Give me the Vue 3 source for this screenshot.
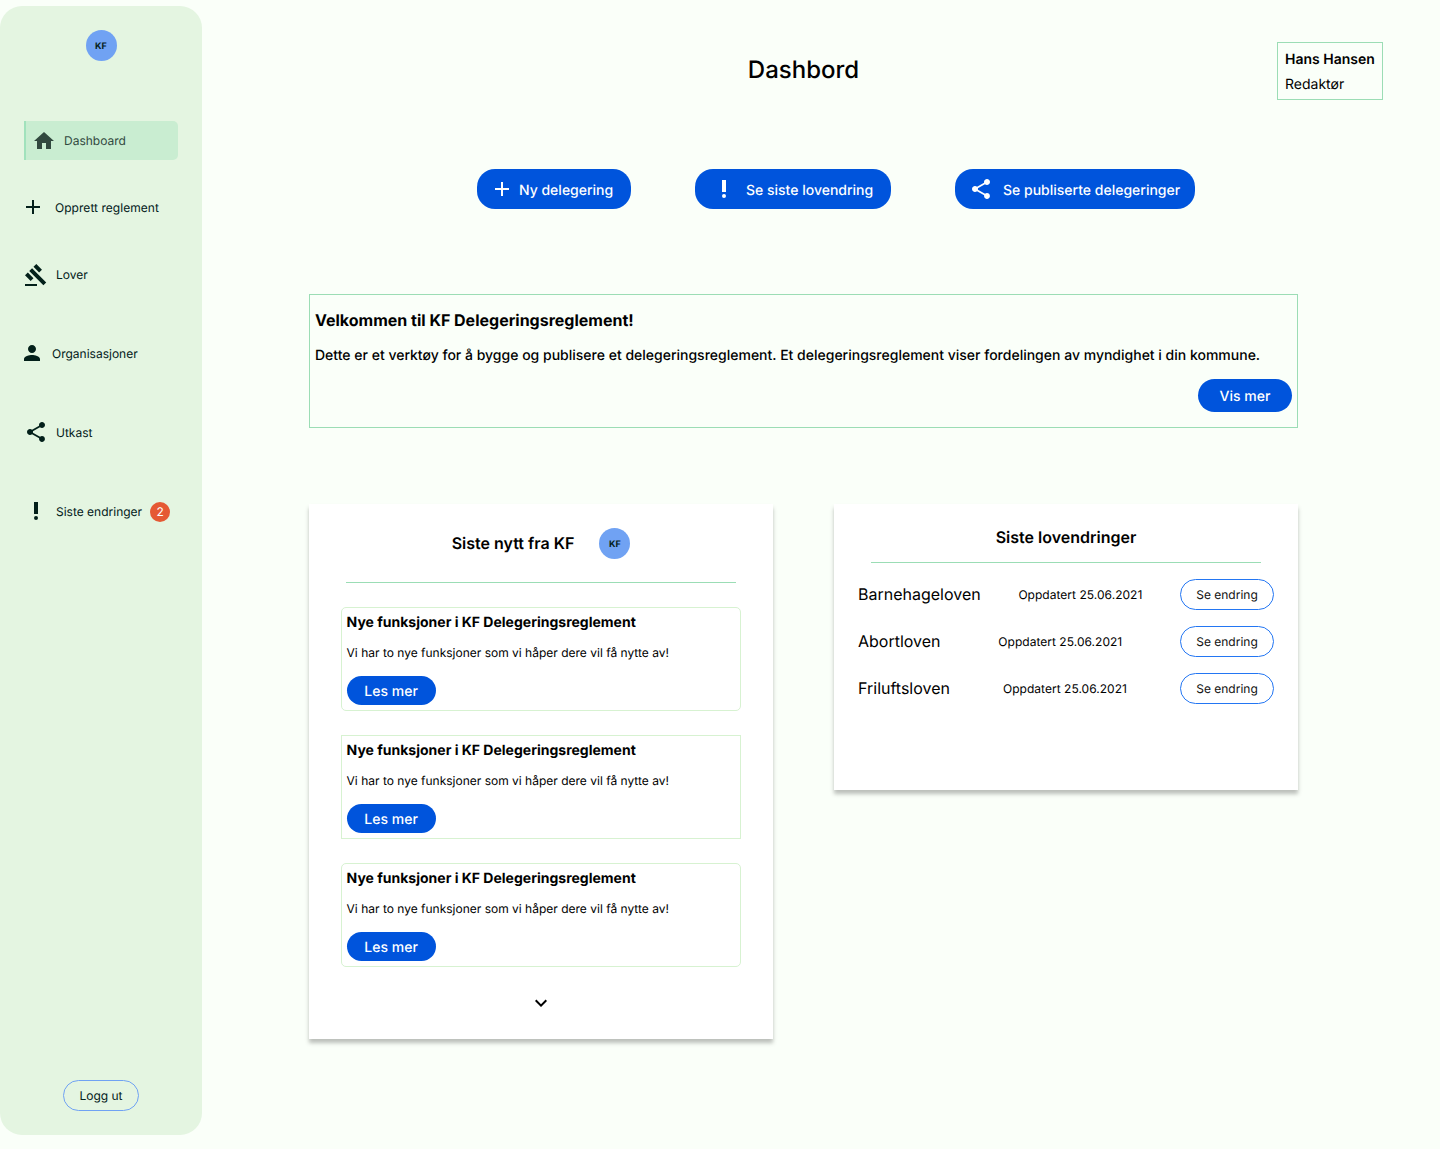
<script setup>
const icons = {
  home: 'M10 20v-6h4v6h5v-8h3L12 3 2 12h3v8z',
  add: 'M19 13h-6v6h-2v-6H5v-2h6V5h2v6h6v2z',
  gavel: 'M1 21h12v2H1zM5.245 8.07l2.83-2.827 14.14 14.142-2.828 2.828zM12.317 1l5.657 5.656-2.83 2.83-5.654-5.66zM3.825 9.485l5.657 5.657-2.828 2.828-5.657-5.657z',
  person: 'M12 12c2.21 0 4-1.79 4-4s-1.79-4-4-4-4 1.79-4 4 1.79 4 4 4zm0 2c-2.67 0-8 1.34-8 4v2h16v-2c0-2.66-5.33-4-8-4z',
  share: 'M18 16.08c-.76 0-1.44.3-1.96.77L8.91 12.7c.05-.23.09-.46.09-.7s-.04-.47-.09-.7l7.05-4.11c.54.5 1.25.81 2.04.81 1.66 0 3-1.34 3-3s-1.34-3-3-3-3 1.34-3 3c0 .24.04.47.09.7L8.04 9.81C7.5 9.31 6.79 9 6 9c-1.66 0-3 1.34-3 3s1.34 3 3 3c.79 0 1.5-.31 2.04-.81l7.12 4.16c-.05.21-.08.43-.08.65 0 1.61 1.31 2.92 2.92 2.92s2.92-1.31 2.92-2.92-1.31-2.92-2.92-2.92z',
  alert: 'M10 3h4v12h-4zM12 17a2 2 0 1 0 0 4 2 2 0 0 0 0-4z',
  more: 'M16.59 8.59L12 13.17 7.41 8.59 6 10l6 6 6-6z',
}
const nav = [
  { name: 'dashboard', icon: 'home', label: 'Dashboard' },
  { name: 'create', icon: 'add', label: 'Opprett reglement' },
  { name: 'laws', icon: 'gavel', label: 'Lover' },
  { name: 'orgs', icon: 'person', label: 'Organisasjoner' },
  { name: 'drafts', icon: 'share', label: 'Utkast' },
  { name: 'changes', icon: 'alert', label: 'Siste endringer', badge: 2 },
]
const actions = [
  { name: 'new', icon: 'add', label: 'Ny delegering' },
  { name: 'recent', icon: 'alert', label: 'Se siste lovendring' },
  { name: 'published', icon: 'share', label: 'Se publiserte delegeringer' },
]
const news = [1, 2, 3]
const laws = ['Barnehageloven', 'Abortloven', 'Friluftsloven']
</script>

<template>
  <div class="page">
    <aside class="sidebar">
      <div class="logo">KF</div>
      <nav class="nav">
        <a v-for="n in nav" :key="n.name" class="nav-item" :class="n.name">
          <svg class="icon" viewBox="0 0 24 24"><path :d="icons[n.icon]" /></svg>
          <span>{{ n.label }}</span>
          <span v-if="n.badge" class="badge">{{ n.badge }}</span>
        </a>
      </nav>
      <button class="outline logout">Logg ut</button>
    </aside>

    <main class="main">
      <header class="header">
        <h1>Dashbord</h1>
        <div class="user">
          <strong>Hans Hansen</strong>
          <span>Redaktør</span>
        </div>
      </header>

      <div class="actions">
        <button v-for="a in actions" :key="a.name" class="primary action" :class="a.name">
          <svg class="icon" viewBox="0 0 24 24"><path :d="icons[a.icon]" /></svg>
          <span>{{ a.label }}</span>
        </button>
      </div>

      <section class="welcome">
        <h2>Velkommen til KF Delegeringsreglement!</h2>
        <p>Dette er et verktøy for å bygge og publisere et delegeringsreglement. Et delegeringsreglement viser fordelingen av myndighet i din kommune.</p>
        <button class="primary show">Vis mer</button>
      </section>

      <div class="cards">
        <section class="card news">
          <div class="card-head">
            <h3>Siste nytt fra KF</h3>
            <div class="logo">KF</div>
          </div>
          <div class="rule"></div>
          <article v-for="i in news" :key="i" class="item">
            <h4>Nye funksjoner i KF Delegeringsreglement</h4>
            <p>Vi har to nye funksjoner som vi håper dere vil få nytte av!</p>
            <button class="primary read">Les mer</button>
          </article>
          <svg class="icon" viewBox="0 0 24 24"><path :d="icons.more" /></svg>
        </section>

        <section class="card laws-card">
          <h3>Siste lovendringer</h3>
          <div class="rule"></div>
          <div v-for="l in laws" :key="l" class="law">
            <span class="law-name">{{ l }}</span>
            <span class="law-date">Oppdatert 25.06.2021</span>
            <button class="outline">Se endring</button>
          </div>
        </section>
      </div>
    </main>
  </div>
</template>

<style>
body { background: #fafff9; }
</style>

<style scoped>
* { box-sizing: border-box; margin: 0; }
.page {
  display: flex;
  height: 1149px;
  padding-top: 6px;
  overflow: hidden;
  background: #fafff9;
  color: #000;
  font-family: Inter, sans-serif;
  text-rendering: geometricPrecision;
}
button { font-family: inherit; padding: 0; cursor: pointer; text-rendering: inherit; }
.icon { width: 24px; height: 24px; flex: none; fill: currentColor; display: block; }
.logo {
  width: 31px; height: 31px; border-radius: 50%; flex: none;
  background: #70a2f3; color: #05201a;
  font-size: 9px; font-weight: 700; line-height: 33px; text-align: center;
}
.outline {
  height: 31px; border: 1px solid #2376f3; border-radius: 16px; background: transparent;
  font-size: 12px; width: 94px; color: #111; line-height: 29px;
}
.primary {
  border: 0; background: #0054dc; color: #fff; border-radius: 18px;
  font-size: 14px; font-weight: 500; padding-top: 1px;
}

.sidebar {
  width: 202px; height: 1129px; flex: none; padding: 24px 24px;
  display: flex; flex-direction: column; align-items: center;
  background: #e4f5e1; border-radius: 22px; color: #03201a;
}
.nav { width: 154px; margin-top: 60px; display: flex; flex-direction: column; gap: 40px; }
.nav-item { display: flex; align-items: center; height: 39px; font-size: 12px; gap: 8px; white-space: nowrap; }
.create .icon, .orgs .icon, .drafts .icon, .changes .icon { margin-bottom: 1px; }
.dashboard { background: #c9edd1; border-left: 2px solid #a1e2bc; border-radius: 0 5px 5px 0; padding-left: 6px; color: #31493f; }
.create { margin: -12px 0 -12px -3px; gap: 10px; letter-spacing: .04px; }
.orgs { margin-left: -4px; }
.badge {
  width: 20px; height: 20px; border-radius: 50%; background: #e55934; color: #fff;
  text-align: center; line-height: 19px;
}
.logout { width: 76px; margin-top: auto; border-color: #70a2f3; color: #03201a; }

.main { flex: 1; padding: 36px 57px 0 107px; display: flex; flex-direction: column; }
.header { display: grid; grid-template-columns: 989px 1fr; height: 58px; }
h1 { font-size: 24px; font-weight: 500; line-height: 55px; text-align: center; }
.user {
  width: 106px; height: 58px; justify-self: end; margin-left: -30px; padding: 4px 0 0 7px; border: 1px solid #9bddb5;
  display: flex; flex-direction: column; font-size: 14px; line-height: 25px; white-space: nowrap;
}
.user strong { font-weight: 600; }

.actions { display: flex; gap: 64px; margin: 69px 0 0 168px; }
.action { height: 40px; padding-top: 0; display: flex; align-items: center; white-space: nowrap; }
.action span { padding-top: 2px; }
.new { width: 154px; padding-left: 13px; gap: 5px; }
.recent { width: 196px; padding-left: 17px; gap: 10px; }
.published { width: 240px; padding-left: 14px; gap: 10px; }

.welcome {
  width: 989px; height: 134px; margin-top: 85px; padding: 13px 5px 0; border: 1px solid #9bddb5;
  display: flex; flex-direction: column;
}
h2 { font-size: 16px; font-weight: 700; line-height: 24px; }
.welcome p { margin-top: 12px; font-size: 14px; font-weight: 500; line-height: 24px; white-space: nowrap; }
.show { width: 94px; height: 33px; margin-top: 10.5px; padding-top: 2px; align-self: flex-end; }

.cards { display: flex; align-items: flex-start; gap: 61px; margin-top: 76px; }
.card { width: 464px; background: #fff; box-shadow: 0 4px 4px rgba(0, 0, 0, .25); display: flex; flex-direction: column; align-items: center; }
.news { height: 535px; padding-top: 24px; }
.card-head { display: flex; align-items: center; gap: 25px; }
h3 { font-size: 16px; font-weight: 600; line-height: 24px; }
.card-head h3 { margin-top: -1px; }
.rule { width: 390px; height: 1px; background: #9bddb5; }
.news .rule { margin: 23px 0 24px; }
.item {
  width: 400px; height: 104px; margin-bottom: 24px; padding: 5px 5px 0 4.6px; border: 1px solid #d7f2d1; border-radius: 5px;
}
.item:nth-of-type(2) { border-radius: 0; }
h4 { font-size: 14px; font-weight: 700; line-height: 20px; }
.item p { font-size: 12px; line-height: 20px; margin-top: 10px; white-space: nowrap; }
.read { display: block; width: 89px; height: 29px; margin-top: 13px; border-radius: 15px; }
.laws-card { height: 286px; padding-top: 21px; }
.laws-card .rule { margin: 13px 0 16px; }
.law { width: 416px; height: 31px; margin-bottom: 16px; display: flex; align-items: center; justify-content: space-between; }
.law-name { font-size: 16px; margin-top: -1px; }
.law-date { font-size: 12px; letter-spacing: .03px; }
</style>
